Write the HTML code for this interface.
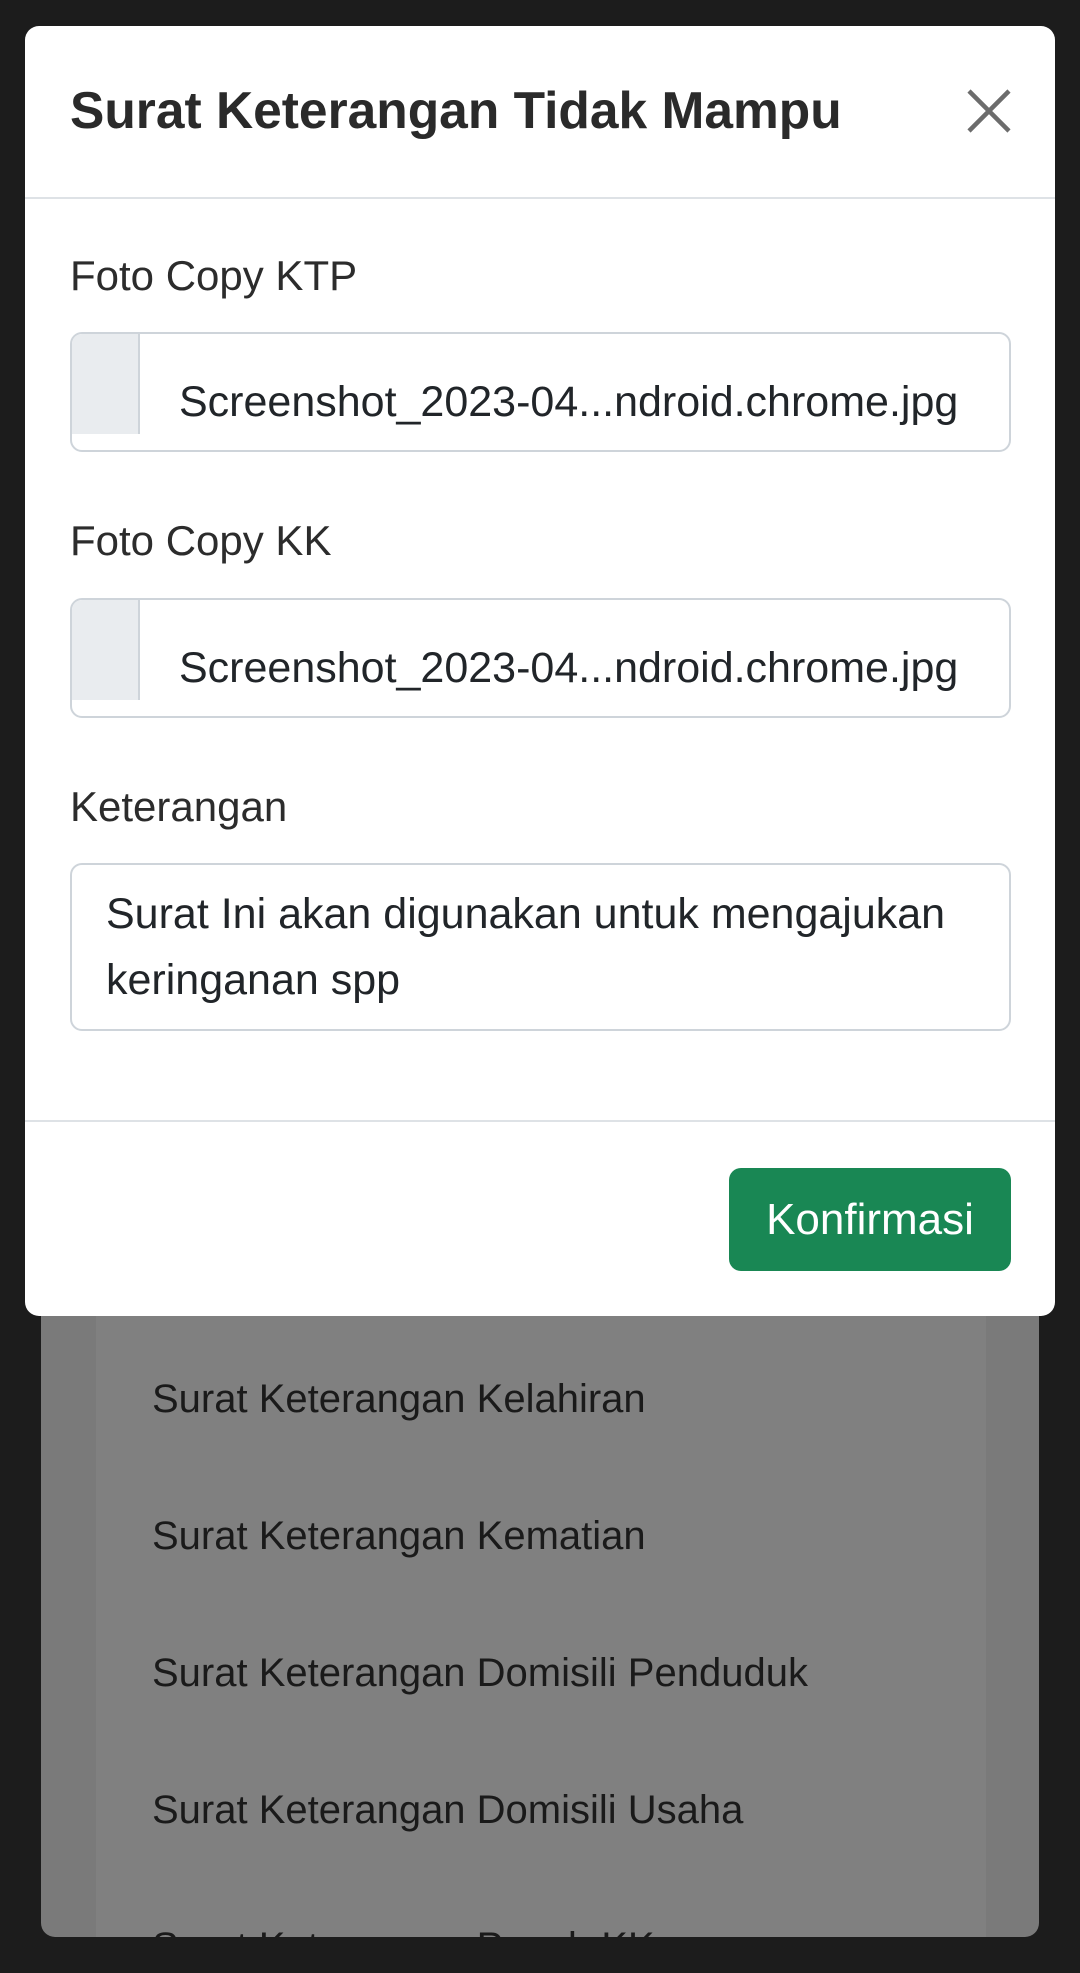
<!DOCTYPE html>
<html><head><meta charset="utf-8"><style>
*{box-sizing:border-box;margin:0;padding:0}
body{width:1080px;height:1973px;background:#1c1c1c;position:relative;overflow:hidden;font-family:"Liberation Sans",sans-serif;color:#212529}
.card{position:absolute;left:41px;top:1250px;width:998px;height:687px;background:#7a7a7a;border-radius:0 0 14px 14px}
.col{position:absolute;left:96px;top:1250px;width:890px;height:687px;background:#808080}
.li{position:absolute;left:152px;font-size:40px;line-height:46px;color:#1a1a1a;white-space:nowrap}
.modal{position:absolute;left:25px;top:26px;width:1030px;height:1290px;background:#fff;border-radius:14px}
.t{position:absolute;left:70px;top:80px;font-size:51.5px;font-weight:bold;color:#2a2a2a;white-space:nowrap}
.hr{position:absolute;left:25px;width:1030px;height:2px;background:#dee2e6}
.lab{position:absolute;left:70px;font-size:42px;line-height:48px;color:#2c2c2c}
.inp{position:absolute;left:70px;width:941px;height:120px;border:2px solid #ced4da;border-radius:12px;overflow:hidden}
.inp .g{position:absolute;left:0;top:0;width:68px;height:100px;background:#e9ecef;border-right:2px solid #ced4da}
.inp .f{position:absolute;left:107px;top:43px;font-size:43px;line-height:50px;color:#212529;white-space:nowrap}
.ta{position:absolute;left:70px;top:863px;width:941px;height:168px;border:2px solid #ced4da;border-radius:12px;padding:16px 0 0 34px;font-size:43px;line-height:66px;color:#212529;white-space:nowrap}
.btn{position:absolute;left:729px;top:1168px;width:282px;height:103px;background:#198754;border-radius:12px;color:#fff;font-size:44px;text-align:center;line-height:103px}
</style></head><body>
<div class="card"></div><div class="col"></div>
<div class="li" style="top:1376px">Surat Keterangan Kelahiran</div>
<div class="li" style="top:1513px">Surat Keterangan Kematian</div>
<div class="li" style="top:1650px">Surat Keterangan Domisili Penduduk</div>
<div class="li" style="top:1787px">Surat Keterangan Domisili Usaha</div>
<div class="li" style="top:1924px;height:13px;overflow:hidden">Surat Keterangan Pecah KK</div>
<div class="modal"></div>
<div class="t">Surat Keterangan Tidak Mampu</div>
<svg style="position:absolute;left:967px;top:89px" width="44" height="44" viewBox="0 0 44 44"><path d="M2 2L42 42M42 2L2 42" stroke="#6c6c6c" stroke-width="4.5"/></svg>
<div class="hr" style="top:197px"></div>
<div class="lab" style="top:252px">Foto Copy KTP</div>
<div class="inp" style="top:332px"><div class="g"></div><div class="f">Screenshot_2023-04...ndroid.chrome.jpg</div></div>
<div class="lab" style="top:517px">Foto Copy KK</div>
<div class="inp" style="top:598px"><div class="g"></div><div class="f">Screenshot_2023-04...ndroid.chrome.jpg</div></div>
<div class="lab" style="top:783px">Keterangan</div>
<div class="ta">Surat Ini akan digunakan untuk mengajukan<br>keringanan spp</div>
<div class="hr" style="top:1120px"></div>
<div class="btn">Konfirmasi</div>
</body></html>
